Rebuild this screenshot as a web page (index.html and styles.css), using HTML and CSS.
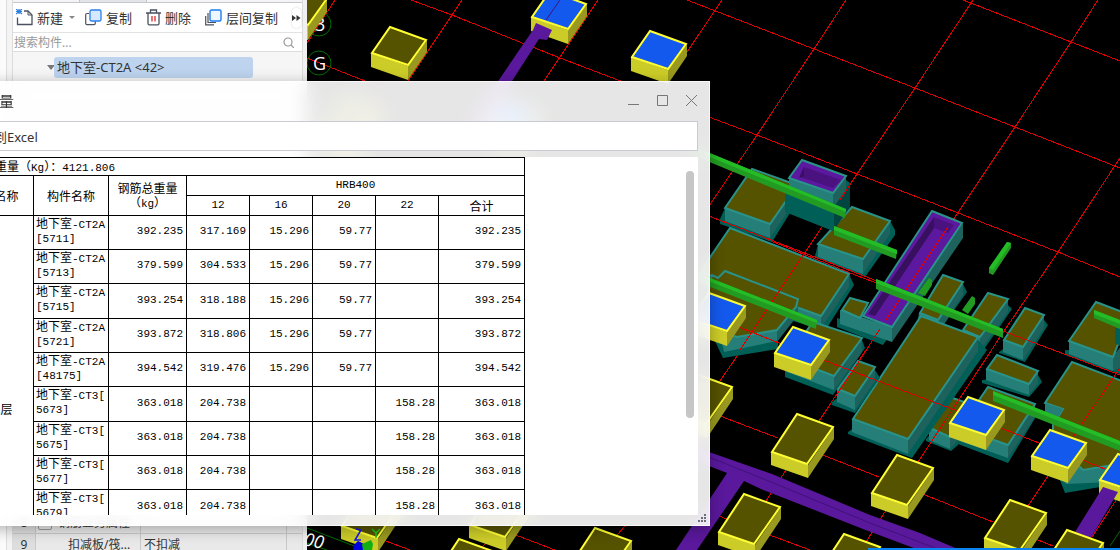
FILE: index.html
```html
<!DOCTYPE html>
<html lang="zh-CN">
<head>
<meta charset="utf-8">
<title>查看钢筋量</title>
<link rel="stylesheet" href="styles.css">
</head>
<body>
<main class="app">
  <div class="rail"></div>
  <aside class="sidebar">
    <div class="tabs"><span class="tab"></span><span class="tab tab-idle"></span></div>
    <div class="tools">
      <button class="tool" type="button">
        <svg width="17" height="17" viewBox="0 0 17 17" fill="none"><path d="M8 2h4l4 4v9.500h-14.500v-7" stroke="#4a5160" stroke-width="1.300"/><path d="M12 2v4h4" stroke="#4a5160"/><path d="M0 0l6 5M6 0l-6 5M3 0v5M0 2.500h6" stroke="#2f7fe0" stroke-width="1.200"/></svg>
        新建<span class="caret"></span></button>
      <button class="tool" type="button">
        <svg width="17" height="17" viewBox="0 0 17 17" fill="none"><path d="M4 4.500h-2q-1.300 0-1.300 1.300v8.500q0 1.300 1.300 1.300h7q1.300 0 1.300-1.300v-2" stroke="#4a5160" stroke-width="1.200"/><rect x="5" y="1" width="11" height="11" rx="1.500" fill="#d6e8ff" stroke="#2b80e8" stroke-width="1.300"/></svg>
        复制</button>
      <button class="tool" type="button">
        <svg width="15" height="17" viewBox="0 0 15 17" fill="none"><path d="M0 4h15M4.500 4v-3h6v3M2 4v10.500q0 1.300 1.300 1.300h8.400q1.300 0 1.300-1.300v-10.500" stroke="#4a5160" stroke-width="1.300"/><path d="M6 7v5.500M9 7v5.500" stroke="#e02828" stroke-width="1.300"/></svg>
        删除</button>
      <button class="tool" type="button">
        <svg width="17" height="17" viewBox="0 0 17 17" fill="none"><path d="M3 4v9.500h8M.700 7v8.800h8.300" stroke="#4a5160" stroke-width="1.200"/><rect x="5" y="1" width="11" height="11" rx="1.500" fill="#eef6ff" stroke="#1f7cf0" stroke-width="1.400"/></svg>
        层间复制</button>
      <button class="more" type="button" aria-label="更多"><svg width="9" height="6" viewBox="0 0 9 6"><path d="M0 0l4 3-4 3zM4.500 0l4 3-4 3z" fill="#333"/></svg></button>
    </div>
    <label class="search">
      <input type="search" placeholder="搜索构件..." aria-label="搜索构件">
      <svg width="11" height="11" viewBox="0 0 11 11" fill="none" stroke="#999" stroke-width="1.200"><circle cx="5" cy="5" r="4"/><path d="M8 8l3 3"/></svg>
    </label>
    <div class="tree">
      <div class="node"><span class="twisty"></span><span class="picked">地下室-CT2A &lt;42&gt;</span></div>
    </div>
    <div class="props">
      <div class="prop"><span class="idx">8</span><span class="key group"><i class="fold"></i>钢筋业务属性</span><span class="val"></span><span></span></div>
      <div class="prop"><span class="idx">9</span><span class="key leaf">扣减板/筏...</span><span class="val">不扣减</span><span></span></div>
    </div>
  </aside>
  <div class="splitter"></div>

  <section class="scene">
    <svg class="view" viewBox="307 0 813 550" preserveAspectRatio="xMinYMin slice">
      <defs>
        <g id="cap">
          <path class="y-front" d="M-19 27L18 40V54L-19 41z"/><path class="y-side" d="M18 40L37 14V26L18 54z"/>
          <path class="y-top" d="M0 1L36 14L18 39L-18 27z"/>
        </g>
        <g id="capl">
          <path class="y-front" d="M-26 39L11 52V65L-26 52z"/><path class="y-side" d="M11 52L37 14V26L11 65z"/>
          <path class="y-top" d="M0 1L36 14L10 51L-25 39z"/>
        </g>
      </defs>

      <g class="axis">
        <path d="M411 0L452 15L560 58L618 80L709 117L757 135L857 174L925 200L1058 252L1120 277"/>
        <path d="M687 0L814 49L915 88L1015 127L1120 168"/>
        <path d="M963 0L1071 42L1120 61"/>
        <path d="M307 58L365 81L709 216L850 273L1003 331L1120 375"/>
        <path d="M462 0L408 81M335 0L307 43M598 0L544 81M722 0L687 52"/>
        <path d="M846 0L814 49L757 135L709 206"/>
        <path d="M973 0L915 88L857 174L804 254"/>
        <path d="M1098 0L1071 42L1015 127L953 220"/>
        <path d="M1120 158L1058 252L1004 331L918 462"/>
        <path d="M748 340L720 381M866 350L819 421M788 467L766 501M888 507L866 542M1052 470L1028 506M1120 494L1092 537"/>
        <path d="M720 416L778 438M820 454L879 477M920 493L993 522M1033 538L1053 546M719 516L727 519M767 534L810 550M375 537L410 550M513 534L555 550M625 526L617 535M487 542L482 547M735 547L733 550"/>
      </g>

      <g>
        <path class="t-base" d="M720 219L725 208L797 190L790 213L772 242L720 224z"/>
        <path class="t-front" d="M725 208L770 224V238L725 221z"/><path class="t-side" d="M770 224L797 185V198L770 238z"/>
        <path class="t-top" d="M752 169L797 185L770 224L725 208z"/>

        <path class="t-base" d="M815 256L818 244L890 221L895 230V235L865 277L815 257z"/>
        <path class="t-front" d="M818 244L863 259V274L818 257z"/><path class="t-side" d="M863 259L890 221V234L863 274z"/>
        <path class="t-top" d="M852 207L890 221L863 259L818 244z"/>

        <path class="t-base" d="M785 190L846 180L850 183V207L833 231L785 212z"/>
        <path class="t-deep" d="M834 205L850 183V207L834 230z"/>
        <path class="t-front" d="M789 177L833 193V208L789 191z"/><path class="t-side" d="M833 193L846 176V190L833 208z"/>
        <path class="t-pit" d="M802 160L846 176L833 193L789 178z"/>
        <path class="p-mid" d="M804 167L841 180L833 188L800 177z"/><path class="p-dark" d="M804 167V176L799 178z"/>

        <path class="t-base" d="M849 274L854 285L825 331L790 320z"/>
        <path class="t-front" d="M700 270L821 316V328L780 314z"/><path class="t-side" d="M821 316L849 274V287L821 328z"/>
        <path class="t-top" d="M730 228L849 274L821 316L700 272z"/>

        <path class="t-base" d="M712 335L723 358L778 349L778 335z"/>
        <path class="t-front" d="M720 333L777 328V341L724 352z"/><path class="t-side" d="M777 330L798 299V315L777 342z"/>
        <path class="t-top" d="M725 271L798 299L796 307L777 330L737 337L700 325L712 275L718 278z"/>

        <path class="t-base" d="M785 370L862 340L865 348L833 395L785 377z"/>
        <path class="t-front" d="M787 355L834 376V390L787 372z"/><path class="t-side" d="M834 376L862 338V352L834 390z"/>
        <path class="t-top" d="M813 322L862 338L834 376L787 358z"/>

        <path class="t-base" d="M837 318L890 335L883 345L837 327z"/>
        <path class="t-front" d="M840 310L892 327V342L840 324z"/>
        <path class="t-top" d="M850 298L868 303L860 318L842 310z"/>
        <path class="t-side" d="M892 327L963 223V238L892 342z"/>
        <path class="t-pit" d="M932 211L962 223L892 327L863 316z"/>
        <path class="p-dark" d="M934 217V228L875 316L868 314z"/><path class="p-mid" d="M934 217L954 225L948 233L934 228z"/>

        <path class="t-base" d="M918 322L963 284L967 292L940 330z"/>
        <path class="t-side" d="M938 316L963 282V295L940 330z"/><path class="t-front" d="M919 313L938 320V332L917 326z"/>
        <path class="t-top" d="M943 275L963 282L938 320L920 313z"/>

        <path class="t-base" d="M963 335L1008 305L1012 309L980 355L968 350z"/>
        <path class="t-front" d="M963 330L980 337V351L963 344z"/><path class="t-side" d="M980 337L1008 299V312L980 351z"/>
        <path class="t-top" d="M988 293L1008 299L980 337L963 330z"/>

        <path class="t-base" d="M999 352L1044 320L1048 325L1025 362L999 353z"/>
        <path class="t-front" d="M1003 340L1023 347V360L1003 352z"/><path class="t-side" d="M1023 347L1044 315V328L1023 360z"/>
        <path class="t-top" d="M1025 308L1044 315L1023 347L1004 340z"/>

        <path class="t-base" d="M982 380L1038 375L1042 382L1029 397L982 383z"/>
        <path class="t-front" d="M986 369L1029 384V395L986 380z"/><path class="t-side" d="M1029 384L1038 371V383L1029 395z"/>
        <path class="t-top" d="M997 355L1038 371L1029 384L987 369z"/>

        <path class="t-base" d="M1065 350L1120 352V374L1065 355z"/>
        <path class="t-front" d="M1069 341L1113 357V371L1069 354z"/><path class="t-side" d="M1113 357L1125 340V365L1113 371z"/>
        <path class="t-top" d="M1096 302L1130 315L1113 357L1069 341z"/><path class="t-base" d="M1115 328H1120V346L1115 343z"/>

        <path class="t-base" d="M1054 465L1107 466L1100 487L1065 493z"/>
        <path class="t-front" d="M1055 470L1110 463V482L1066 484z"/>
        <path class="t-top" d="M1072 362L1130 384V462L1083 470L1053 440V425L1063 409L1045 403z"/>
        <path class="t-front" d="M1045 403L1063 409L1053 426L1045 414z"/>

        <path class="t-base" d="M926 439L958 405V445L951 451L926 441z"/>
        <path class="t-front" d="M929 428L950 437V449L929 440z"/><path class="t-side" d="M950 437L965 420V432L950 449z"/>
        <path class="t-top" d="M950 397L970 404L950 437L930 428z"/>
        <path class="t-base" d="M958 440L1035 408L1037 415L1008 463L958 444z"/>
        <path class="t-front" d="M960 430L1008 445V458L960 441z"/><path class="t-side" d="M1008 445L1035 404V417L1008 458z"/>
        <path class="t-top" d="M988 387L1035 404L1008 445L960 428z"/>

        <path class="t-base" d="M848 432L978 340L987 350L912 458L848 434z"/>
        <path class="t-front" d="M852 419L908 439V454L852 432z"/><path class="t-side" d="M908 439L978 337V351L908 454z"/>
        <path class="t-top" d="M921 316L978 337L908 439L853 419z"/>

        <path class="t-base" d="M832 402L875 370L880 378L855 413L832 405z"/>
        <path class="t-front" d="M837 389L855 396V410L837 402z"/><path class="t-side" d="M855 396L875 367V381L855 410z"/>
        <path class="t-top" d="M858 361L875 367L855 396L838 389z"/>
      </g>

      <g class="axis">
        <path d="M709 216L877 281M804 254L740 350M739 327L779 343L920 397L955 410L1039 443L1105 469"/>
        <path d="M948 227L886 320M880 329L852 372L835 397M857 174L840 200M1010 322L960 398L918 462M1120 368L1073 437M1003 331L1120 375"/>
      </g>

      <g class="beam">
        <path d="M690 145L846 209L845 218L690 154z"/><path d="M834 226L897 250L896 259L834 235z"/>
        <path d="M876 279L1003 329V338L876 289z"/><path d="M690 270L817 320L816 329L690 279z"/>
        <path d="M1007 242L1011 243V248L993 275L989 273V268z"/><path d="M929 278L932 280V285L925 296L918 293z"/>
        <path d="M972 296L975 298V304L968 314L962 310z"/><path d="M1094 310L1120 320V329L1094 318z"/><path d="M993 391L1120 441V451L993 401z"/>
      </g>
      <g class="beam-lit">
        <path d="M690 145L846 209V212L690 149z"/><path d="M834 226L897 250V254L834 230z"/><path d="M876 279L1003 329V332L876 283z"/>
        <path d="M690 270L817 320V323L690 274z"/><path d="M1007 242L1011 243L993 270L989 268z"/><path d="M1094 310L1120 320V324L1094 314z"/><path d="M993 391L1120 441V445L993 395z"/>
      </g>

      <path class="girder" d="M660 433L709 452L772 474L870 515L920 533L960 550H919L863 529L761 489L744 481L697 550H676L727 473L709 466L660 448z"/>
      <path class="seam" d="M709 457L776 484L870 523L935 548"/>

      <g class="bubble"><circle cx="319" cy="24" r="12"/><circle cx="319" cy="63" r="12"/><path d="M307 528L357 547M307 543L327 550M1120 531L1110 546"/></g>
      <text class="mark" x="315" y="31">3</text>
      <text class="mark" x="313" y="70">G</text>
      <text class="mark slant" x="303" y="545" transform="rotate(12 303 545)">00</text>

      <use href="#cap" x="290" y="-14" class="olive"/>
      <use href="#cap" x="390" y="26" class="olive"/>
      <use href="#cap" x="550" y="-10" class="blue"/>
      <path d="M560 0L546 20" class="seam"/>
      <path class="girder" d="M536 23L552 30L547 40L539 39L480 131H464L533 30z"/>
      <use href="#cap" x="650" y="30" class="blue"/>
      <use href="#cap" x="503" y="98" class="blue"/>
      <use href="#capl" x="345" y="95" class="olive"/>
      <use href="#cap" x="709" y="292" class="blue"/>
      <use href="#cap" x="793" y="326" class="blue"/>
      <use href="#cap" x="968" y="396" class="blue"/>
      <use href="#cap" x="1050" y="429" class="blue"/>
      <use href="#cap" x="1118" y="453" class="blue"/>
      <path class="girder" d="M1103 487L1118 492L1091 538L1075 532z"/>
      <use href="#capl" x="696" y="373" class="olive"/>
      <use href="#capl" x="797" y="413" class="olive"/>
      <use href="#capl" x="897" y="454" class="olive"/>
      <use href="#capl" x="744" y="493" class="olive"/>
      <use href="#capl" x="844" y="533" class="olive"/>
      <use href="#capl" x="1010" y="499" class="olive"/>
      <use href="#capl" x="1067" y="529" class="olive"/>
      <use href="#capl" x="367" y="487" class="olive"/>
      <use href="#capl" x="495" y="486" class="olive"/>
      <use href="#capl" x="595" y="527" class="olive"/>
      <use href="#capl" x="459" y="538" class="olive"/>

      <path d="M356 529L361 530L355 540H361" fill="none" stroke="#1414e6" stroke-width="1.500"/>
      <path d="M358 541l6 3v6h-11l1-5z" fill="#0000e0"/>
      <path d="M372 529l4 4 4-4M376 533v5" fill="none" stroke="#1cc81c" stroke-width="1.500"/>
      <path d="M362 544l9-4 2 4-1 6h-9z" fill="#12b012"/>
      <path d="M868 548H1120V550H868z" fill="#0a84f0"/>
    </svg>
  </section>
</main>

<section class="dialog" role="dialog" aria-label="查看钢筋量">
  <header class="titlebar">
    <h1 class="title">查看钢筋量</h1>
    <div class="winctl">
      <button type="button" aria-label="最小化"><svg width="11" height="11" viewBox="0 0 11 11"><path d="M0 9.500h11" stroke="#777"/></svg></button>
      <button type="button" aria-label="最大化"><svg width="11" height="11" viewBox="0 0 11 11"><path d="M.500 .500h10v10h-10z" fill="none" stroke="#777"/></svg></button>
      <button type="button" aria-label="关闭"><svg width="11" height="11" viewBox="0 0 11 11"><path d="M0 0l11 11M11 0l-11 11" stroke="#777"/></svg></button>
    </div>
  </header>
  <div class="actions"><button class="export" type="button">导出到Excel</button></div>
  <div class="sheet">
    <div class="grid">
      <table class="qty">
        <colgroup><col class="c-floor"><col class="c-name"><col class="c-total"><col class="c-dia"><col class="c-dia"><col class="c-dia"><col class="c-dia"><col></colgroup>
        <thead>
          <tr class="top"><td colspan="8" class="sum">钢筋总重量（<span class="m">Kg</span>）：<span class="m">4121.806</span></td></tr>
          <tr><th rowspan="2">楼层名称</th><th rowspan="2">构件名称</th><th rowspan="2">钢筋总重量<br>（<span class="m">kg</span>）</th><th colspan="5" class="m">HRB400</th></tr>
          <tr><th class="m">12</th><th class="m">16</th><th class="m">20</th><th class="m">22</th><th>合计</th></tr>
        </thead>
        <tbody>
          <tr><td class="floor" rowspan="11">基础层</td><td class="name">地下室<span class="m">-CT2A<br>[5711]</span></td><td>392.235</td><td>317.169</td><td>15.296</td><td>59.77</td><td></td><td>392.235</td></tr>
          <tr><td class="name">地下室<span class="m">-CT2A<br>[5713]</span></td><td>379.599</td><td>304.533</td><td>15.296</td><td>59.77</td><td></td><td>379.599</td></tr>
          <tr><td class="name">地下室<span class="m">-CT2A<br>[5715]</span></td><td>393.254</td><td>318.188</td><td>15.296</td><td>59.77</td><td></td><td>393.254</td></tr>
          <tr><td class="name">地下室<span class="m">-CT2A<br>[5721]</span></td><td>393.872</td><td>318.806</td><td>15.296</td><td>59.77</td><td></td><td>393.872</td></tr>
          <tr><td class="name">地下室<span class="m">-CT2A<br>[48175]</span></td><td>394.542</td><td>319.476</td><td>15.296</td><td>59.77</td><td></td><td>394.542</td></tr>
          <tr><td class="name">地下室<span class="m">-CT3[<br>5673]</span></td><td>363.018</td><td>204.738</td><td></td><td></td><td>158.28</td><td>363.018</td></tr>
          <tr><td class="name">地下室<span class="m">-CT3[<br>5675]</span></td><td>363.018</td><td>204.738</td><td></td><td></td><td>158.28</td><td>363.018</td></tr>
          <tr><td class="name">地下室<span class="m">-CT3[<br>5677]</span></td><td>363.018</td><td>204.738</td><td></td><td></td><td>158.28</td><td>363.018</td></tr>
          <tr><td class="name">地下室<span class="m">-CT3[<br>5679]</span></td><td>363.018</td><td>204.738</td><td></td><td></td><td>158.28</td><td>363.018</td></tr>
          <tr><td class="name"></td><td></td><td></td><td></td><td></td><td></td><td></td></tr>
          <tr><td class="name"></td><td></td><td></td><td></td><td></td><td></td><td></td></tr>
        </tbody>
      </table>
    </div>
    <div class="track"><div class="thumb"></div></div>
  </div>
  <svg class="grip" width="9" height="9" viewBox="0 0 9 9"><path d="M6 0h2v2h-2zM3 3h2v2h-2zM6 3h2v2h-2zM0 6h2v2h-2zM3 6h2v2h-2zM6 6h2v2h-2z" fill="#6a6e76"/></svg>
</section>
</body>
</html>
```
FILE: styles.css
```css
* { box-sizing: border-box; }
body {
  margin: 0;
  overflow: hidden;
  font: 13px "Noto Sans", "Noto Sans CJK SC", sans-serif;
  color: #333;
}
button { font: inherit; color: inherit; background: none; border: 0; padding: 0; }
svg { display: block; flex: none; }

.app { display: flex; height: 100vh; background: #f4f4f4; }
.rail { flex: 0 0 7px; border-right: 1px solid #dcdcdc; background: #fbfbfb; margin-right: 5px; }
.sidebar {
  flex: 0 0 291px;
  display: flex;
  flex-direction: column;
  min-width: 0;
  border: solid #dcdcdc;
  border-width: 0 1px;
  background: #fff;
}
.splitter { flex: 0 0 4px; background: #f0f0f0; }

.tabs { display: flex; height: 3px; border-bottom: 1px solid #c4c8ce; background: #f4f4f4; }
.tab { flex: 0 0 67px; background: #f4f4f4; border-right: 1px solid #c4c8ce; }
.tab-idle { background: #e2e4e8; }

.tools { display: flex; align-items: center; height: 30px; padding: 0 1px 0 3px; gap: 14px; border-bottom: 1px solid #e2e2e2; }
.tool { display: flex; align-items: center; gap: 4px; white-space: nowrap; }
.caret { border: 3px solid transparent; border-top-color: #888; border-bottom: 0; margin: 0 -4px 0 2px; }
.more { display: flex; align-items: center; justify-content: center; width: 12px; height: 20px; margin-left: auto; border-radius: 4px; background: #fff; box-shadow: 0 0 2px #ccc; }

.search { display: flex; align-items: center; height: 19px; padding: 0 8px 0 1px; border-bottom: 1px solid #dcdcdc; }
.search input { flex: 1; min-width: 0; border: 0; padding: 0; outline: 0; background: none; font: inherit; font-size: 12px; }
.search input::placeholder { color: #999; }

.tree { flex: 1; min-height: 0; padding: 5px 49px 0 34px; background: #f6f6f6; }
.node { display: flex; align-items: center; }
.twisty { border: 4px solid transparent; border-top: 5px solid #777; border-bottom: 0; margin-right: -1px; }
.picked { flex: 1; line-height: 21px; padding-left: 3px; border-radius: 3px; background: #bdd3ee; white-space: nowrap; }

.props { flex: 0 0 38px; overflow: hidden; background: #e9e9e9; font-size: 12px; }
.prop { display: grid; grid-template-columns: 22px 105px 146px 1fr; height: 22px; line-height: 21px; border-bottom: 1px solid #c9c9c9; white-space: nowrap; }
.prop > span + span { border-left: 1px solid #c9c9c9; }
.idx { text-align: center; background: #dedede; }
.group { display: flex; align-items: center; gap: 6px; padding-left: 2px; }
.fold { width: 14px; height: 14px; border: 1px solid #999; border-radius: 2px; }
.leaf { padding-left: 32px; }
.val { padding-left: 3px; }

.scene { flex: 1; min-width: 0; background: #000; overflow: hidden; }
.view { width: 100%; height: 100%; }
.axis { fill: none; stroke: #dc0000; stroke-width: 1; shape-rendering: crispEdges; }
.y-front { fill: #cccc28; }
.y-side { fill: #99991f; }
.y-top { fill: currentColor; stroke: #ffff33; stroke-width: 2; }
.olive { color: #555200; }
.blue { color: #1459ee; }
.t-base { fill: #006058; }
.t-deep { fill: #00453f; }
.t-front { fill: #257f78; }
.t-side { fill: #1d625d; }
.t-top { fill: #555200; stroke: #2a9389; stroke-width: 2; }
.t-pit { fill: #5c189e; stroke: #2a9389; stroke-width: 2; }
.p-mid { fill: #4a127f; }
.p-dark { fill: #37105f; }
.beam { fill: #229b22; }
.beam-lit { fill: #25bd25; }
.girder { fill: #5a189c; }
.seam { fill: none; stroke: #40137a; stroke-width: 1; }
.bubble { fill: none; stroke: #006e00; stroke-width: 1; }
.mark { fill: #fff; font: 18px "Open Sans", sans-serif; }
.slant { font-style: italic; }

.dialog {
  position: absolute;
  left: -56px;
  top: 81px;
  width: 766px;
  height: 445px;
  display: flex;
  flex-direction: column;
  padding: 0 11px 10px;
  border: solid rgba(255, 255, 255, .7);
  border-width: 1px 1px 1px 0;
  background: rgba(255, 255, 255, .9);
  backdrop-filter: blur(10px);
  box-shadow: 0 3px 14px rgba(0, 0, 0, .3);
}
.titlebar { display: flex; align-items: center; justify-content: space-between; flex: 0 0 39px; padding: 0 1px 2px 0; }
.title { margin: 0; width: 59px; direction: rtl; white-space: nowrap; font-size: 15px; line-height: 20px; font-weight: 400; }
.winctl { display: flex; gap: 18px; }
.actions { display: flex; align-items: center; flex: 0 0 30px; margin-bottom: 6px; padding-left: 12px; border: 1px solid #c8ccd2; background: #fff; }
.sheet { flex: 1; min-height: 0; display: flex; justify-content: space-between; background: #fff; }
.grid { overflow: hidden; }
.track { width: 12px; padding-top: 14px; }
.thumb { width: 8px; height: 247px; border-radius: 4px; background: #c6c6c6; }
.grip { position: absolute; right: 2px; bottom: 2px; }

.qty { width: 570px; table-layout: fixed; border-collapse: collapse; font: 12px/14px "Noto Sans CJK SC", sans-serif; color: #000; }
.c-floor { width: 78px; }
.c-name { width: 75px; }
.c-total { width: 78px; }
.c-dia { width: 63px; }
.qty th, .qty td { border: 1px solid #000; padding: 0 3px; font-weight: 400; }
.qty thead tr { height: 20px; }
.qty thead tr.top { height: 18px; }
.qty tbody tr { height: 34px; }
.qty tbody tr:nth-child(3n) { height: 35px; }
.qty tbody td, .qty .m { font-family: "Liberation Mono", "Noto Sans CJK SC", monospace; font-size: 11px; text-align: right; }
.qty tbody td { padding-bottom: 3px; }
.qty th.m { text-align: center; padding-bottom: 2px; }
.qty tbody td.name { font-size: 12px; text-align: left; padding: 0 2px 2px; white-space: nowrap; }
.qty tbody td.floor { font-size: 12px; text-align: center; padding-top: 16px; }
```
